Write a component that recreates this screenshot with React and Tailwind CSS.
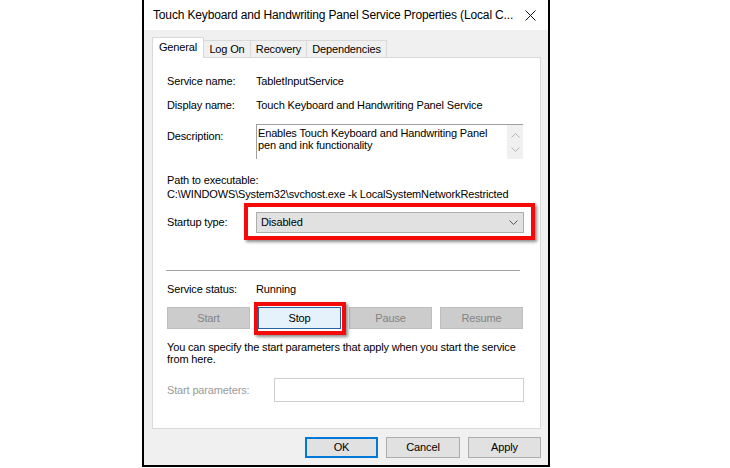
import React from "react";

function Chevron({ up, color }) {
    return (
        <svg width="9" height="5" viewBox="0 0 9 5">
            <path d={up ? "M0.5 4.5 L4.5 0.5 L8.5 4.5" : "M0.5 0.5 L4.5 4.5 L8.5 0.5"} fill="none" stroke={color} strokeWidth="1" />
        </svg>
    );
}

function SmallButton({ label, disabled, focused }) {
    if (disabled) {
        return (
            <div className="w-[83px] h-[22px] flex items-center justify-center bg-[#cccccc] border border-[#bfbfbf] text-[#838383]">
                {label}
            </div>
        );
    }
    return (
        <div className="relative">
            <div className="w-[83px] h-[22px] flex items-center justify-center bg-[#e5f1fb] border border-[#2a62a0] text-black">
                {label}
            </div>
            {focused && (
                <div className="absolute -left-[4px] -right-[5px] -top-[5px] -bottom-[6px] border-4 border-[#f50a0a] shadow-[2px_2px_3px_rgba(0,0,0,0.45)]" />
            )}
        </div>
    );
}

export default function App() {
    return (
        <div className="w-[730px] h-[468px] bg-white flex font-['Liberation_Sans',Arial,sans-serif] text-[11px] leading-[13px] tracking-[-0.15px] text-black">
            <div className="ml-[142px] w-[408px] h-[467px] border-x-2 border-b-2 border-black bg-[#f0f0f0] flex flex-col">
                {/* title bar */}
                <div className="h-[30px] bg-white flex items-center justify-between pl-[9px] pr-[12px]">
                    <span className="text-[12px] leading-[16px] tracking-[-0.15px] whitespace-nowrap">
                        Touch Keyboard and Handwriting Panel Service Properties (Local C...
                    </span>
                    <svg width="11" height="11" viewBox="0 0 11 11">
                        <path d="M0.5 0.5 L10.5 10.5 M10.5 0.5 L0.5 10.5" stroke="#111" strokeWidth="1" />
                    </svg>
                </div>

                {/* tabs */}
                <div className="mt-[7px] ml-[8px] w-[389px] flex items-end h-[21px]">
                    <div className="w-[52px] h-[21px] border-x border-t border-[#d9d9d9] bg-white flex items-center justify-center pb-[1px]">
                        General
                    </div>
                    <div className="w-[47px] h-[18px] border-t border-r border-b border-[#d9d9d9] flex items-center justify-center">
                        Log On
                    </div>
                    <div className="w-[56px] h-[18px] border-t border-r border-b border-[#d9d9d9] flex items-center justify-center">
                        Recovery
                    </div>
                    <div className="w-[80px] h-[18px] border-t border-r border-b border-[#d9d9d9] flex items-center justify-center">
                        Dependencies
                    </div>
                    <div className="flex-1 border-b border-[#d9d9d9]" />
                </div>

                {/* panel */}
                <div className="ml-[8px] w-[389px] h-[371px] bg-white border-x border-b border-[#d9d9d9] pl-[14px] pt-[17px] flex flex-col">
                    <div className="flex">
                        <span className="w-[89px]">Service name:</span>
                        <span>TabletInputService</span>
                    </div>
                    <div className="flex mt-[11px]">
                        <span className="w-[89px]">Display name:</span>
                        <span>Touch Keyboard and Handwriting Panel Service</span>
                    </div>
                    <div className="flex mt-[12px]">
                        <span className="w-[89px] pt-[6px]">Description:</span>
                        <div className="w-[267px] h-[35px] border-t border-l border-[#a0a0a0] flex">
                            <div className="flex-1 pl-[1px] pt-[2px] leading-[12px]">
                                Enables Touch Keyboard and Handwriting Panel
                                <br />
                                pen and ink functionality
                            </div>
                            <div className="w-[16px] bg-[#f0f0f0] flex flex-col items-center pt-[8px] gap-[9px]">
                                <Chevron up color="#b5b5b5" />
                                <Chevron color="#b5b5b5" />
                            </div>
                        </div>
                    </div>
                    <div className="mt-[14px] leading-[14px]">Path to executable:</div>
                    <div className="leading-[14px] whitespace-nowrap">
                        C:\WINDOWS\System32\svchost.exe -k LocalSystemNetworkRestricted
                    </div>
                    <div className="flex items-center mt-[11px]">
                        <span className="w-[89px]">Startup type:</span>
                        <div className="relative">
                            <div className="w-[268px] h-[21px] bg-[#e1e1e1] border border-[#adadad] flex items-center justify-between pl-[4px] pr-[5px]">
                                <span>Disabled</span>
                                <Chevron color="#555" />
                            </div>
                            <div className="absolute -left-[12px] -right-[11px] -top-[9px] -bottom-[7px] border-4 border-[#f50a0a] shadow-[2px_2px_3px_rgba(0,0,0,0.45)]" />
                        </div>
                    </div>
                    <div className="mt-[37px] w-[354px] -ml-[1px] border-t border-[#a0a0a0]" />
                    <div className="flex mt-[12px]">
                        <span className="w-[89px]">Service status:</span>
                        <span>Running</span>
                    </div>
                    <div className="flex justify-between w-[356px] mt-[11px]">
                        <SmallButton label="Start" disabled />
                        <SmallButton label="Stop" focused />
                        <SmallButton label="Pause" disabled />
                        <SmallButton label="Resume" disabled />
                    </div>
                    <div className="mt-[12px] leading-[12px] w-[360px]">
                        You can specify the start parameters that apply when you start the service from here.
                    </div>
                    <div className="flex items-center mt-[13px]">
                        <span className="w-[107px] text-[#9a9a9a]">Start parameters:</span>
                        <div className="w-[250px] h-[24px] border border-[#cfcfcf] bg-white" />
                    </div>
                </div>

                {/* dialog buttons */}
                <div className="mt-[8px] mr-[7px] flex justify-end gap-[8px]">
                    <div className="w-[73px] h-[21px] bg-[#e1e1e1] border-2 border-[#0078d7] flex items-center justify-center">OK</div>
                    <div className="w-[74px] h-[21px] bg-[#e1e1e1] border border-[#adadad] flex items-center justify-center">Cancel</div>
                    <div className="w-[73px] h-[21px] bg-[#e1e1e1] border border-[#adadad] flex items-center justify-center">Apply</div>
                </div>
            </div>
        </div>
    );
}
